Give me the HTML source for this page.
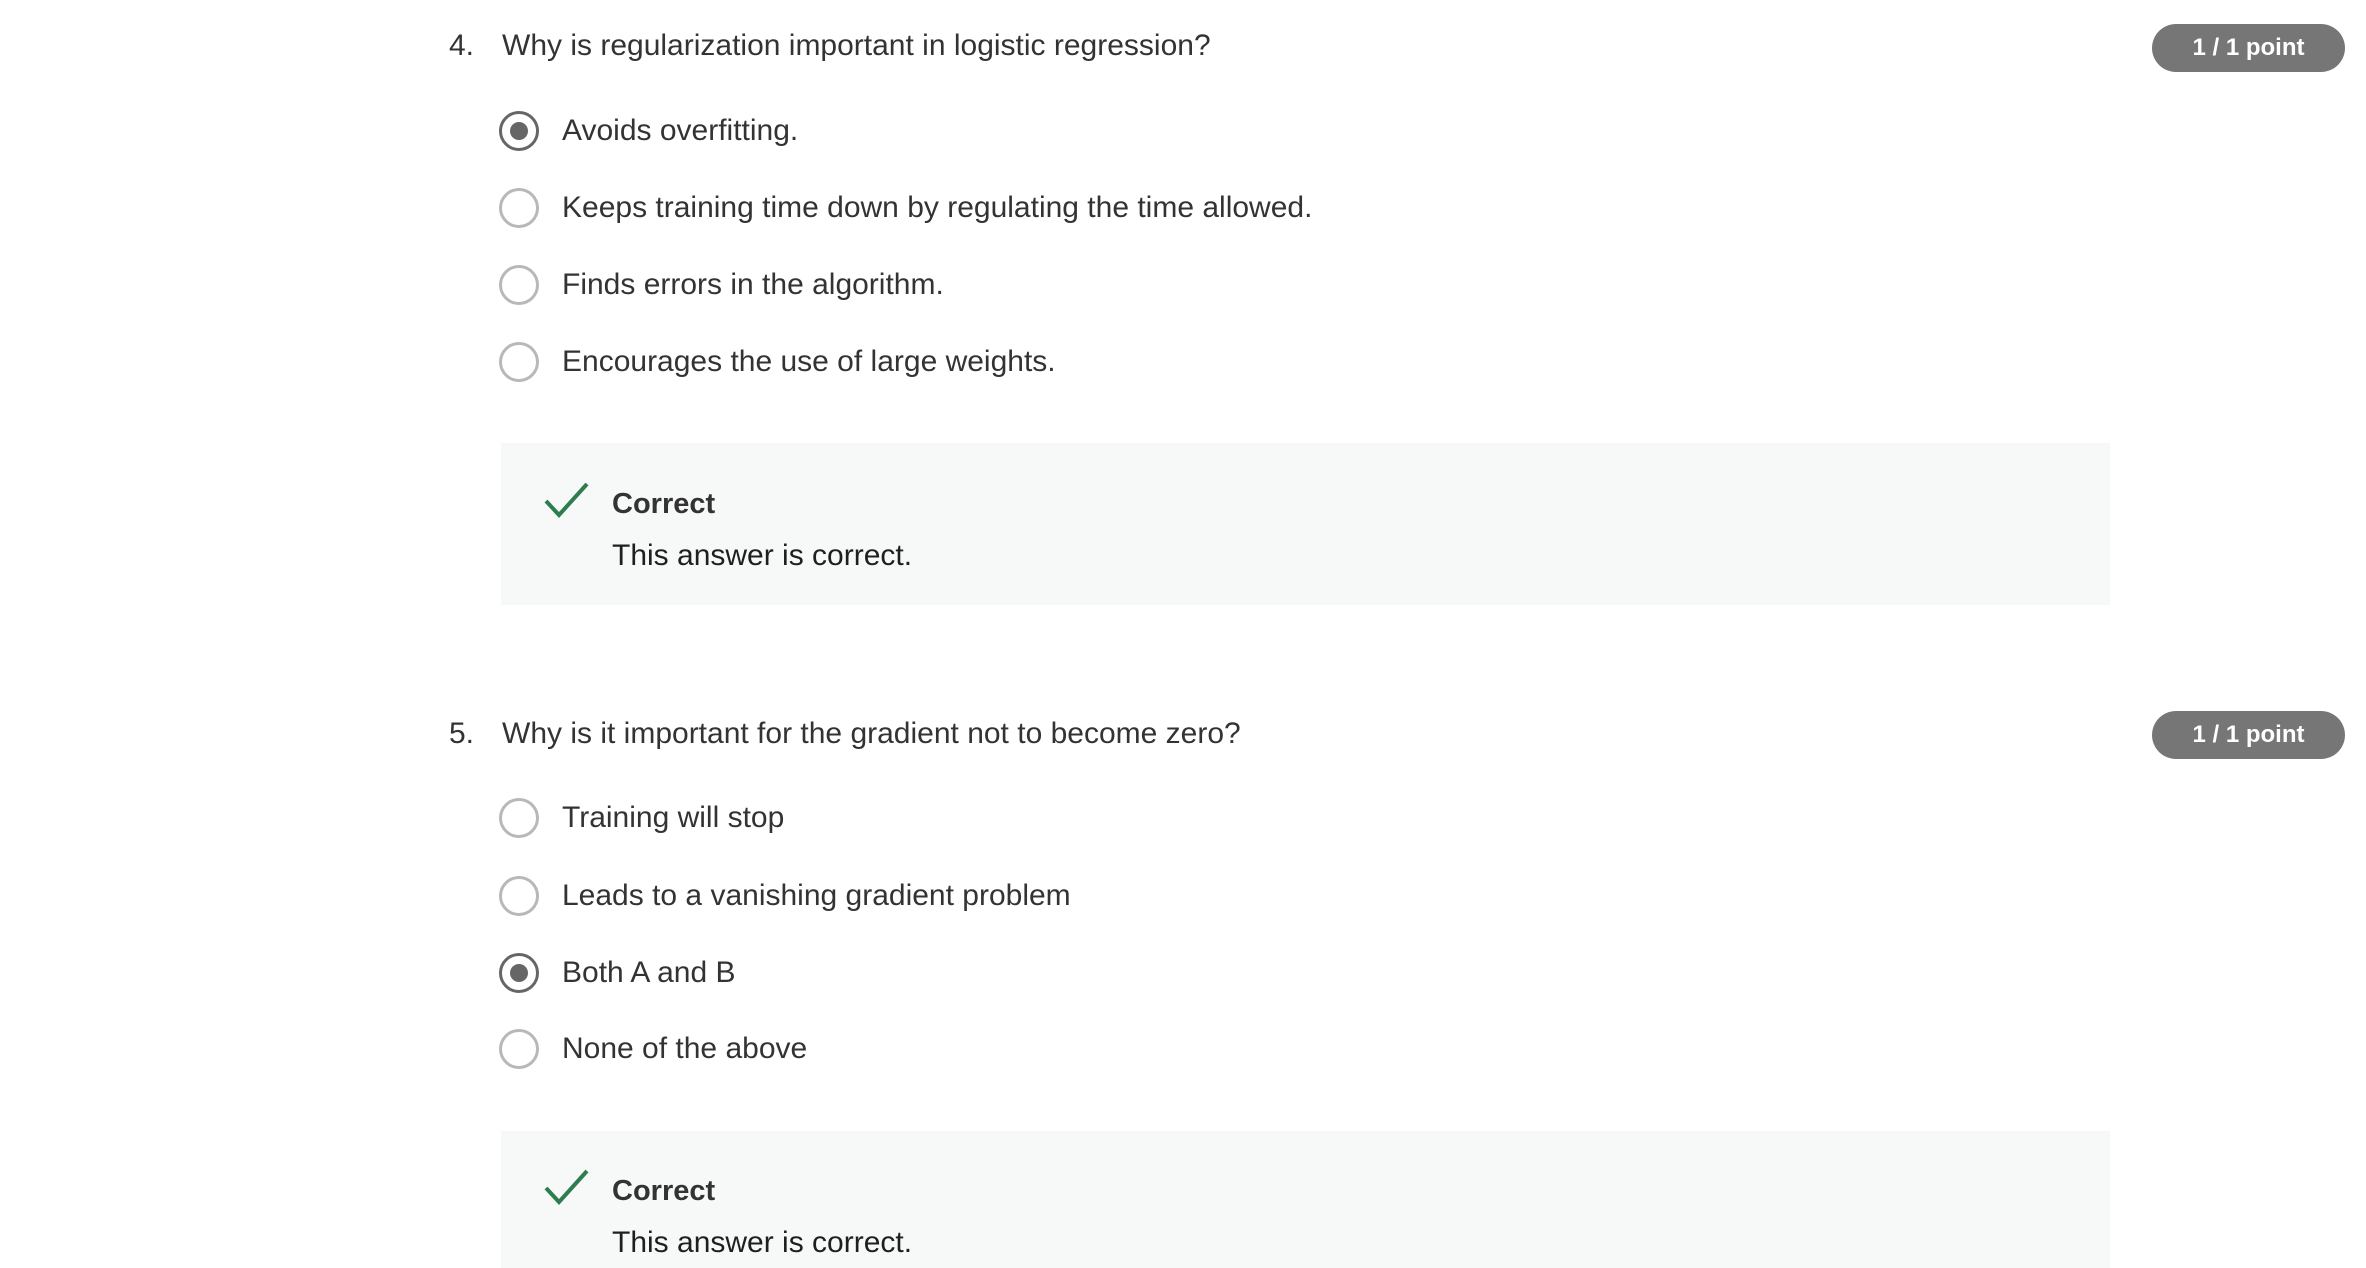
<!DOCTYPE html>
<html><head><meta charset="utf-8"><style>
body{margin:0;width:2366px;height:1268px;background:#fff;overflow:hidden;font-family:"Liberation Sans",sans-serif;color:#333;position:relative}
.a{position:absolute;white-space:nowrap}
.q{font-size:30px;line-height:40px}
.r{position:absolute;width:34px;height:34px;border:3.5px solid #b8b8b8;border-radius:50%;box-sizing:content-box}
.r.c{border-color:#666}
.r.c::after{content:"";position:absolute;left:8px;top:8px;width:18px;height:18px;border-radius:50%;background:#666}
.o{font-size:30px;line-height:40px}
.fb{position:absolute;left:501px;width:1609px;background:#f7f9f8}
.badge{position:absolute;left:2152px;width:193px;height:48px;border-radius:24px;background:#767676;color:#fff;font-weight:bold;font-size:24px;line-height:48px;text-align:center}
</style></head><body>

<div class="a q" style="left:449px;top:26px">4.</div>
<div class="a q" style="left:502px;top:26px">Why is regularization important in logistic regression?</div>
<div class="badge" style="top:24px">1 / 1 point</div>

<div class="r c" style="left:499px;top:111px"></div><div class="a o" style="left:562px;top:111px">Avoids overfitting.</div>
<div class="r" style="left:499px;top:188px"></div><div class="a o" style="left:562px;top:188px">Keeps training time down by regulating the time allowed.</div>
<div class="r" style="left:499px;top:265px"></div><div class="a o" style="left:562px;top:265px">Finds errors in the algorithm.</div>
<div class="r" style="left:499px;top:342px"></div><div class="a o" style="left:562px;top:342px">Encourages the use of large weights.</div>

<div class="fb" style="top:443px;height:162px"></div>
<svg class="a" style="left:543px;top:480px" width="48" height="40"><path d="M3 21 L16 35 L44 4" fill="none" stroke="#2e7d4f" stroke-width="4"/></svg>
<div class="a" style="left:612px;top:484px;font-size:29px;font-weight:bold;line-height:40px">Correct</div>
<div class="a" style="left:612px;top:536px;font-size:30px;line-height:40px;color:#1f1f1f">This answer is correct.</div>

<div class="a q" style="left:449px;top:714px">5.</div>
<div class="a q" style="left:502px;top:714px">Why is it important for the gradient not to become zero?</div>
<div class="badge" style="top:711px">1 / 1 point</div>

<div class="r" style="left:499px;top:798px"></div><div class="a o" style="left:562px;top:798px">Training will stop</div>
<div class="r" style="left:499px;top:876px"></div><div class="a o" style="left:562px;top:876px">Leads to a vanishing gradient problem</div>
<div class="r c" style="left:499px;top:953px"></div><div class="a o" style="left:562px;top:953px">Both A and B</div>
<div class="r" style="left:499px;top:1029px"></div><div class="a o" style="left:562px;top:1029px">None of the above</div>

<div class="fb" style="top:1131px;height:137px"></div>
<svg class="a" style="left:543px;top:1167px" width="48" height="40"><path d="M3 21 L16 35 L44 4" fill="none" stroke="#2e7d4f" stroke-width="4"/></svg>
<div class="a" style="left:612px;top:1171px;font-size:29px;font-weight:bold;line-height:40px">Correct</div>
<div class="a" style="left:612px;top:1223px;font-size:30px;line-height:40px;color:#1f1f1f">This answer is correct.</div>
</body></html>
